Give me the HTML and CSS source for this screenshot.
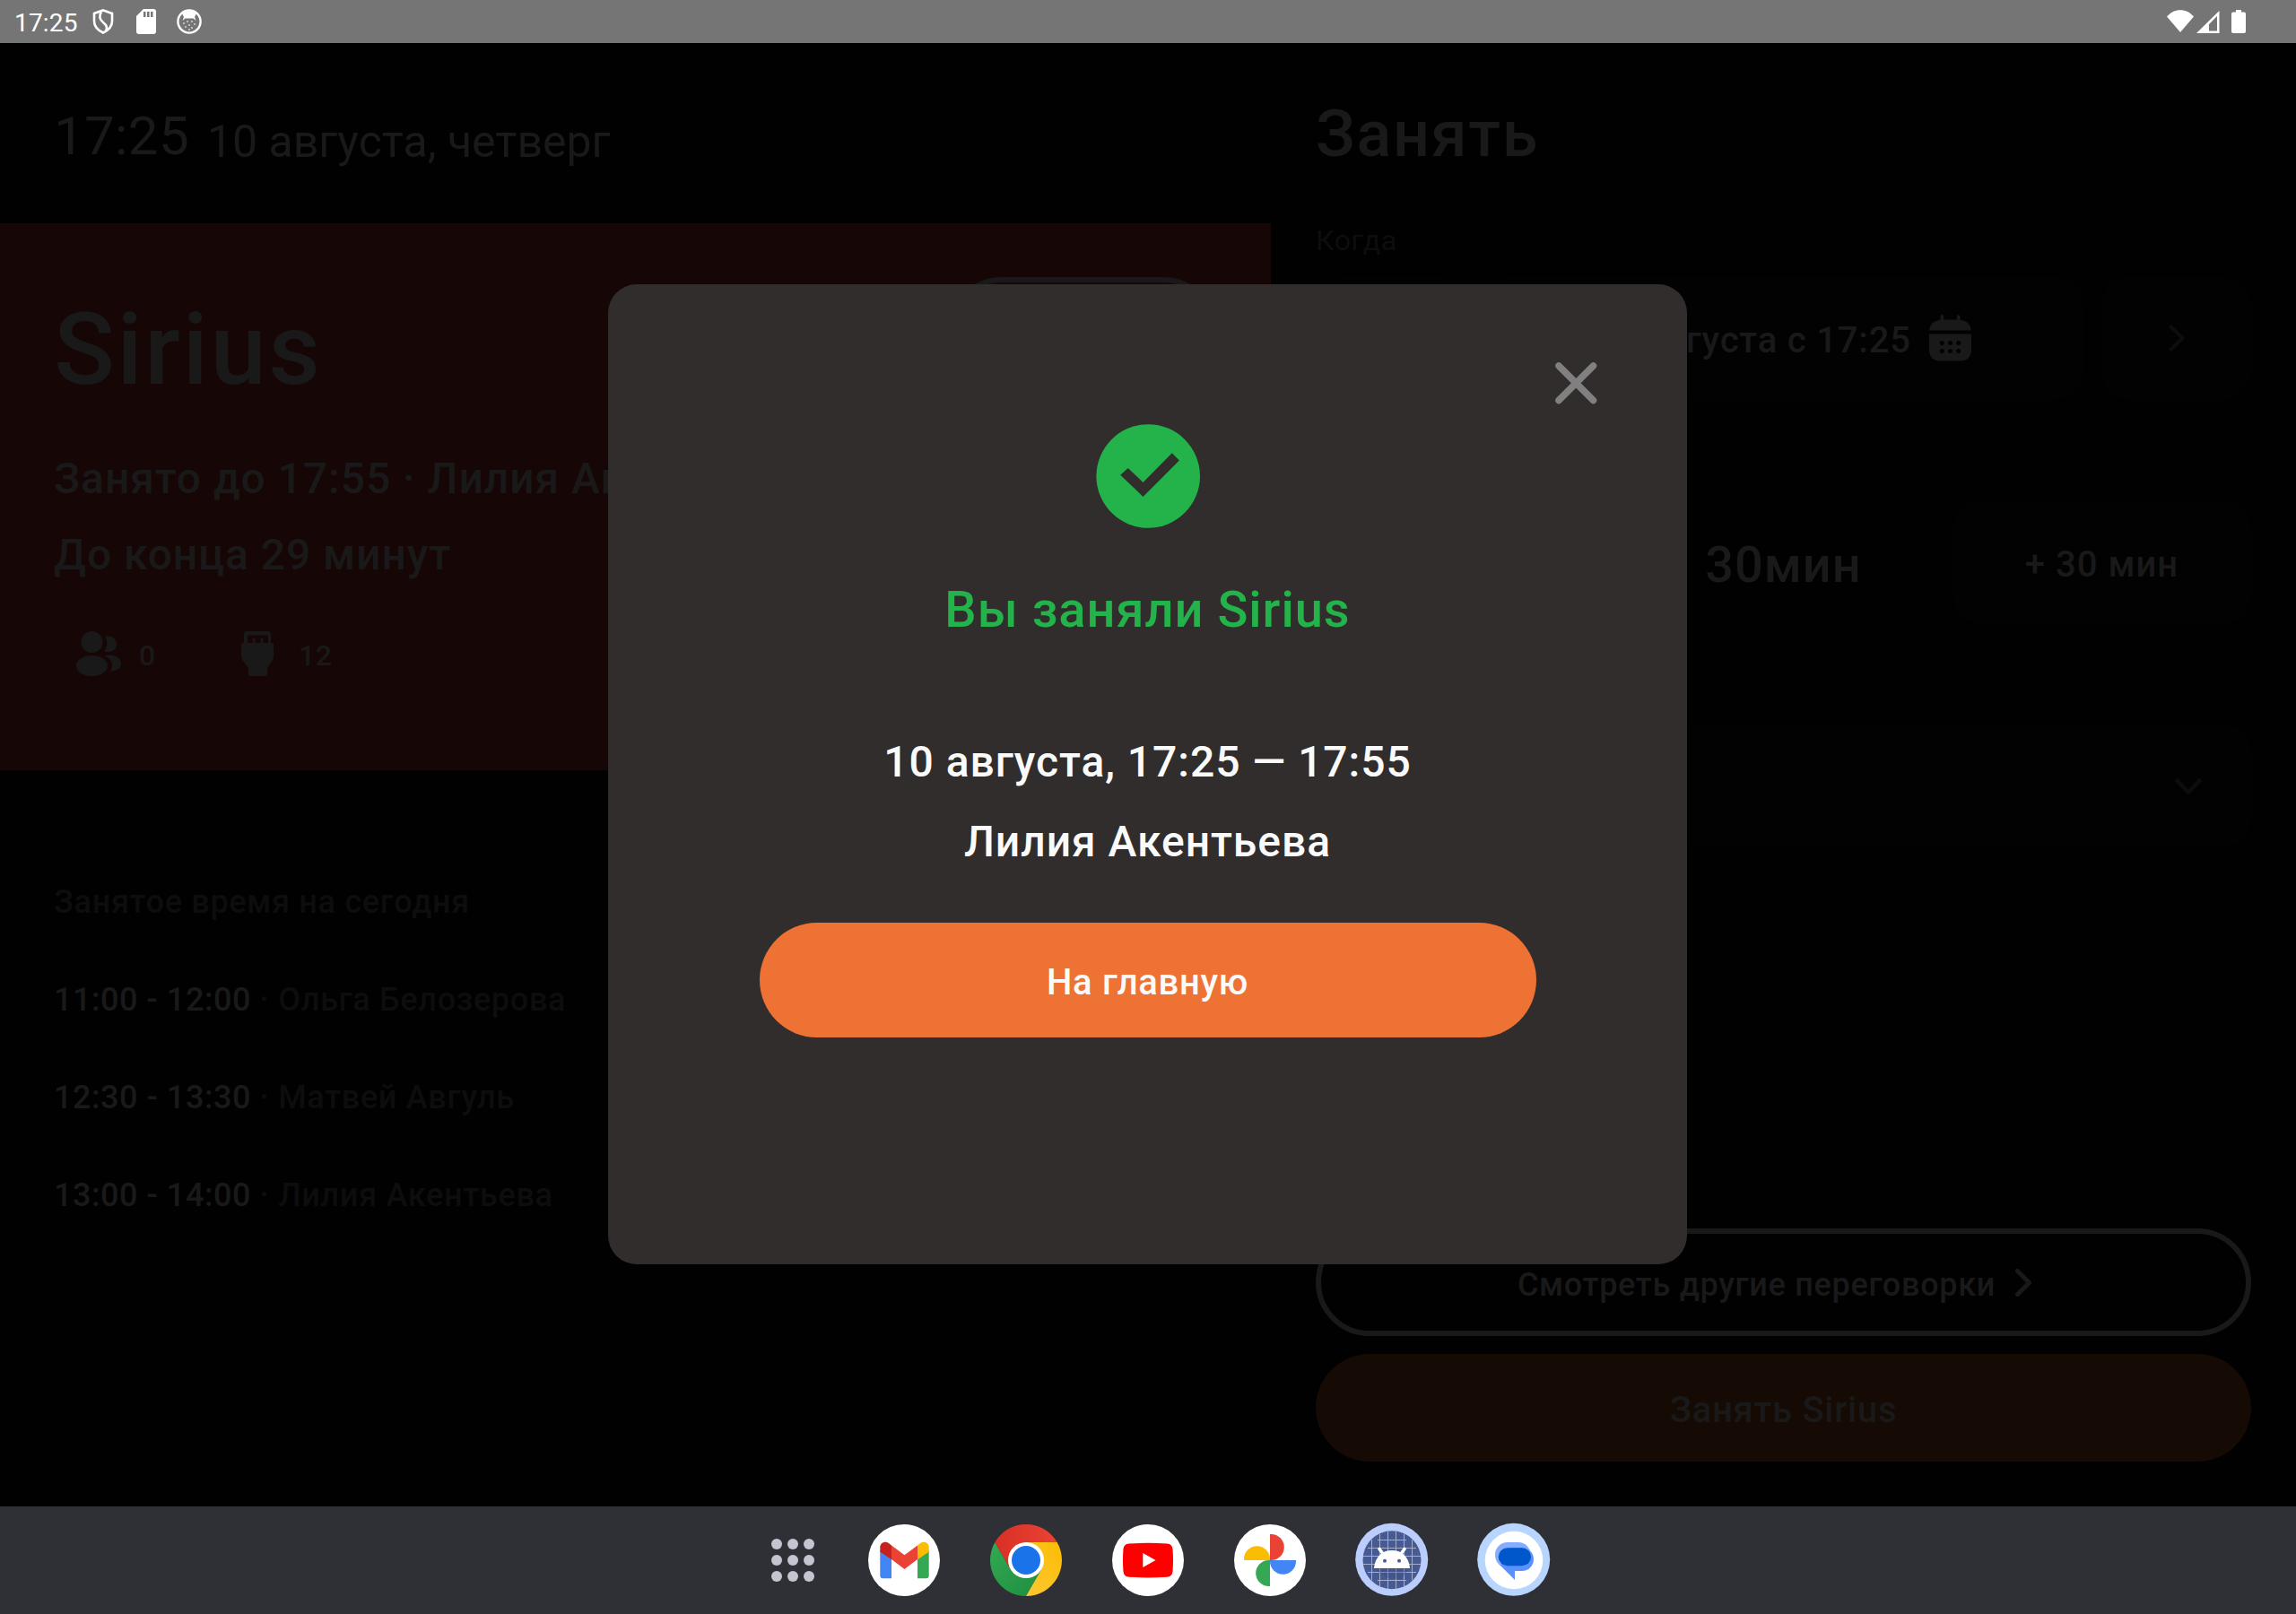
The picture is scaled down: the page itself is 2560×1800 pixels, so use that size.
FILE: index.html
```html
<!DOCTYPE html>
<html lang="ru">
<head>
<meta charset="utf-8">
<title>Sirius</title>
<link rel="stylesheet" href="styles.css">
</head>
<body>
<div class="screen">
  <header class="status">
    <div class="status-left">
      <span class="clock">17:25</span>
      <svg class="st-shield" width="24" height="28" viewBox="0 0 24 28" fill="none" stroke="#fff" stroke-width="2.6"><path d="M12 1.500 22 5v8.500c0 6-4.300 10.300-10 13-5.700-2.700-10-7-10-13V5z"/><path d="M10 3c-3 5-2 9 2.500 12.500C16 18 17 21 15 24.500"/></svg>
      <svg class="st-sd" width="22" height="28" viewBox="0 0 22 28"><path fill="#fff" fill-rule="evenodd" d="M8 0h11a3 3 0 0 1 3 3v22a3 3 0 0 1-3 3H3a3 3 0 0 1-3-3V8zM8 3v6h2.500V3zM12 3v6h2.500V3zM16 3v6h2.500V3z"/></svg>
      <svg class="st-cat" width="28" height="28" viewBox="0 0 28 28"><circle cx="14" cy="14" r="12.600" fill="none" stroke="#fff" stroke-width="2.400"/><path fill="#fff" d="M6 5C9 1 19 1 22 5l-2 4 1.500 4-3-2.500h-9L6.500 13 8 9z"/><g fill="#ddd"><circle cx="8" cy="16" r=".9"/><circle cx="12" cy="14" r=".9"/><circle cx="17" cy="14" r=".9"/><circle cx="20" cy="17" r=".9"/><circle cx="10" cy="20" r=".9"/><circle cx="14" cy="18" r=".9"/><circle cx="17" cy="21" r=".9"/><circle cx="14" cy="23" r=".9"/></g></svg>
    </div>
    <div class="status-right">
      <svg width="30" height="25" viewBox="0 0 30 25"><path fill="#fff" d="M15 25 0 7.500C8-2.300 22-2.300 30 7.500z"/></svg>
      <svg class="st-signal" width="26" height="25" viewBox="0 0 26 25"><path fill="#fff" fill-rule="evenodd" d="M25.500 0v25H0zM23 6 14 15v7.500h9z"/></svg>
      <svg class="st-battery" width="16" height="26" viewBox="0 0 16 26"><path fill="#fff" d="M5 0h6v2.500h3a2 2 0 0 1 2 2V24a2 2 0 0 1-2 2H2a2 2 0 0 1-2-2V4.500a2 2 0 0 1 2-2h3z"/></svg>
    </div>
  </header>

  <main class="app">
    <section class="room">
      <div class="now"><span class="now-time">17:25</span><span class="now-date">10 августа, четверг</span></div>
      <div class="state">
        <div class="state-info">
          <h1 class="room-name">Sirius</h1>
          <p class="state-line">Занято до 17:55 · Лилия Акентьева</p>
          <p class="state-line state-left">До конца 29 минут</p>
          <div class="features">
            <svg class="f-people" width="50" height="50" viewBox="0 0 50 50" fill="#191919"><circle cx="17.500" cy="12" r="12"/><ellipse cx="17.500" cy="38.500" rx="17.500" ry="11.500"/><path d="M32 5.500c7-1.500 13 3 13 9 0 6.500-7 10.500-14 8C35 17 35.500 11 32 5.500z"/><path d="M31 27c11-2 19 2 19 9.500 0 5-5 8-12 8.300C42 38 40 31 31 27z"/></svg>
            <span class="f-num">0</span>
            <svg class="f-hdmi" width="36" height="50" viewBox="0 0 36 50"><path fill="#191919" fill-rule="evenodd" d="M6 0h24a3 3 0 0 1 3 3v10h1.500A1.500 1.500 0 0 1 36 14.500V28c0 6-7 10-7 15v5a2 2 0 0 1-2 2H10a2 2 0 0 1-2-2v-5C8 38 0 34 0 28V14.500A1.500 1.500 0 0 1 1.500 13H3V3a3 3 0 0 1 3-3zM7 4.500V13h5.500V8h3v5h6V8h3v5H30V4.500z"/></svg>
            <span class="f-num">12</span>
          </div>
        </div>
        <div class="release"></div>
      </div>
      <div class="schedule">
        <p class="muted">Занятое время на сегодня</p>
        <p><b>11:00 - 12:00</b><span class="muted"> · Ольга Белозерова</span></p>
        <p><b>12:30 - 13:30</b><span class="muted"> · Матвей Авгуль</span></p>
        <p><b>13:00 - 14:00</b><span class="muted"> · Лилия Акентьева</span></p>
      </div>
    </section>

    <section class="booking">
      <h2 class="booking-title">Занять</h2>
      <p class="label">Когда</p>
      <div class="row-date">
        <div class="tile"></div>
        <div class="tile date">
          <span class="btn-text">10 августа с 17:25</span>
          <svg width="47" height="52" viewBox="0 0 47 52"><path fill="#191919" fill-rule="evenodd" d="M14.500 0A1.700 1.700 0 0 1 16 1.700V5.500H31V1.700a1.700 1.700 0 0 1 3.400 0V5.700C42 6.500 46.500 11 46.700 17.500H.3C.5 11 5 6.500 12.600 5.700V1.700A1.700 1.700 0 0 1 14.500 0zM0 21.500H47V39c0 8-4.500 12.500-12.500 12.500h-22C4.500 51.500 0 47 0 39zM11.800 31.500a2.500 2.500 0 1 0 5 0 2.500 2.500 0 0 0-5 0zM21 31.500a2.500 2.500 0 1 0 5 0 2.500 2.500 0 0 0-5 0zM30.200 31.500a2.500 2.500 0 1 0 5 0 2.500 2.500 0 0 0-5 0zM11.800 40.500a2.500 2.500 0 1 0 5 0 2.500 2.500 0 0 0-5 0zM21 40.500a2.500 2.500 0 1 0 5 0 2.500 2.500 0 0 0-5 0zM30.200 40.500a2.500 2.500 0 1 0 5 0 2.500 2.500 0 0 0-5 0z"/></svg>
        </div>
        <div class="tile"><svg width="18" height="30" viewBox="0 0 18 30" fill="none" stroke="#0d0d0d" stroke-width="4" stroke-linecap="round" stroke-linejoin="round"><path d="M2.500 2.500 15.500 15l-13 12.500"/></svg></div>
      </div>
      <div class="row-length">
        <div class="tile"></div>
        <span class="length">30мин</span>
        <div class="tile"><span class="btn-text plus">+ 30 мин</span></div>
      </div>
      <div class="tile select"><svg width="30" height="18" viewBox="0 0 30 18" fill="none" stroke="#0d0d0d" stroke-width="4.500" stroke-linecap="round" stroke-linejoin="round"><path d="M2.500 2.500 15 15.500l12.500-13"/></svg></div>
      <div class="actions">
        <div class="pill outline"><span>Смотреть другие переговорки</span><svg width="18" height="31" viewBox="0 0 18 31" fill="none" stroke="#191919" stroke-width="5" stroke-linecap="round" stroke-linejoin="round"><path d="M2.500 2.500 15.500 15.500l-13 13"/></svg></div>
        <div class="pill filled"><span class="btn-text">Занять Sirius</span></div>
      </div>
    </section>

    <div class="modal">
      <svg class="close" width="48" height="48" viewBox="0 0 48 48" fill="none" stroke="#808080" stroke-width="7.500" stroke-linecap="round"><path d="M5 5 43.500 43.500M43.500 5 5 43.500"/></svg>
      <svg class="done" width="116" height="116" viewBox="0 0 116 116"><circle cx="58.200" cy="58" r="57.800" fill="#24b34b"/><path fill="#302d2c" d="M27.200 56.800 35.700 49 52.500 65 84.800 32.200 92.900 40.600 52.500 81z"/></svg>
      <h3 class="modal-title">Вы заняли Sirius</h3>
      <p class="modal-line">10 августа, 17:25 — 17:55</p>
      <p class="modal-line modal-name">Лилия Акентьева</p>
      <div class="home"><span class="btn-text">На главную</span></div>
    </div>
  </main>

  <nav class="dock">
    <svg class="apps" width="48" height="48" viewBox="0 0 48 48" fill="#c5c4d0"><circle cx="6" cy="6" r="6"/><circle cx="24" cy="6" r="6"/><circle cx="42" cy="6" r="6"/><circle cx="6" cy="24" r="6"/><circle cx="24" cy="24" r="6"/><circle cx="42" cy="24" r="6"/><circle cx="6" cy="42" r="6"/><circle cx="24" cy="42" r="6"/><circle cx="42" cy="42" r="6"/></svg>
    <svg width="80" height="80" viewBox="0 0 80 80"><circle cx="40" cy="40" r="40" fill="#fff"/><path fill="#4285f4" d="M13.300 29 26 39v21.200H16.300a3 3 0 0 1-3-3z"/><path fill="#34a853" d="M67.700 29 55 39v21.200h9.700a3 3 0 0 0 3-3z"/><path fill="#ea4335" d="M26 23.500 40.500 34.300 55 23.500V39L40.500 50.100 26 39z"/><path fill="#c5221f" d="M13.300 30.700V25.500c0-5 5.300-7.500 9.500-4.500L26 23.500V39.200z"/><path fill="#fbbc04" d="M67.700 30.700V25.500c0-5-5.300-7.500-9.500-4.500L55 23.500V39.200z"/></svg>
    <svg width="80" height="80" viewBox="0 0 80 80">
      <defs><linearGradient id="cr" x1="0" x2="1"><stop offset="0" stop-color="#d93025"/><stop offset="1" stop-color="#ea4335"/></linearGradient><linearGradient id="cy" x1="0" y1="1" x2="1" y2="0"><stop offset="0" stop-color="#fcc934"/><stop offset="1" stop-color="#fbbc04"/></linearGradient><linearGradient id="cg" x1="1" y1="1" x2="0" y2="0"><stop offset="0" stop-color="#1e8e3e"/><stop offset="1" stop-color="#34a853"/></linearGradient></defs>
      <path fill="url(#cg)" d="M57.320 50 40 80A40 40 0 0 1 5.360 20L22.680 50z"/>
      <path fill="url(#cy)" d="M40 20H74.640A40 40 0 0 1 40 80L57.320 50z"/>
      <path fill="url(#cr)" d="M22.680 50 5.360 20A40 40 0 0 1 74.640 20H40z"/>
      <circle cx="40" cy="40" r="20" fill="#fff"/><circle cx="40" cy="40" r="16" fill="#1a73e8"/></svg>
    <svg width="80" height="80" viewBox="0 0 80 80"><circle cx="40" cy="40" r="40" fill="#fff"/><path fill="#f00" d="M19 21.400Q40 20.200 61 21.400C65.500 21.700 67.300 24 67.600 28.500Q68.400 40 67.600 51.500C67.300 56 65.500 58.500 61 58.800Q40 60 19 58.800C14.500 58.500 12.700 56 12.400 51.500Q11.600 40 12.400 28.500C12.700 24 14.500 21.700 19 21.400z"/><path fill="#fff" d="M34.300 32 48.500 40 34.300 48z"/></svg>
    <svg width="80" height="80" viewBox="0 0 80 80"><circle cx="40" cy="40" r="40" fill="#fff"/><path fill="#ea4335" d="M40 11h1.300a14.500 14.500 0 0 1 0 29H40z"/><path fill="#4285f4" d="M69 40v1.300a14.500 14.500 0 0 1-29 0V40z"/><path fill="#34a853" d="M40 69h-1.300a14.500 14.500 0 0 1 0-29H40z"/><path fill="#fbbc04" d="M11 40v-1.300a14.500 14.500 0 0 1 29 0V40z"/></svg>
    <svg width="80" height="80" viewBox="0 0 80 80" class="themed">
      <circle cx="39.700" cy="39.300" r="40.500" fill="#bbcdfd"/><circle cx="40" cy="39.700" r="32.500" fill="#485a92"/>
      <path stroke="#a4adc9" stroke-width="1" fill="none" d="M17.500 17v45.500M26.500 11v58M35.500 8v64M44.500 8v64M53.500 11v58M62.500 17v45.500M24 17.500h32M13 26.500h54M8 35.500h64M8 44.500h64M13 53.500h54M24 62.500h32"/>
      <path fill="#3c4b7c" d="M20 49h40L50 61 34 60z" opacity=".35"/>
      <path stroke="#fff" stroke-width="3.600" stroke-linecap="round" d="M26 27.500l6 8M54 27.500l-6 8"/>
      <path fill="#fff" d="M20 49C21 36.500 29 29 40 29s19 7.500 20 20z"/><circle cx="32" cy="40.700" r="2" fill="#485a92"/><circle cx="48" cy="40.700" r="2" fill="#485a92"/></svg>
    <svg width="80" height="80" viewBox="0 0 80 80" class="themed">
      <circle cx="39.700" cy="39.300" r="40.500" fill="#b8d5fe"/><circle cx="40" cy="40" r="32.300" fill="#fff"/>
      <path fill="#84acff" d="M33 20H45a13.500 13.500 0 0 1 0 27H26C21.500 44 19 39.500 19 34A14 14 0 0 1 33 20z"/>
      <path fill="#5a91ff" d="M36 26H49a13 13 0 0 1 0 26H41V62L25 46z"/>
      <rect x="22.700" y="26.300" width="36.300" height="20" rx="10" fill="#0057cc"/></svg>
  </nav>
</div>
</body>
</html>
```
FILE: styles.css
```css
* { box-sizing: border-box; margin: 0; padding: 0; }
body { background: #010101; font-family: Roboto, "Liberation Sans", sans-serif; font-weight: 400; letter-spacing: 1px; }
svg { display: block; flex: none; }
.screen { width: 2560px; height: 1800px; display: flex; flex-direction: column; overflow: hidden; white-space: nowrap; }

/* system bar */
.status { height: 48px; flex: none; background: #757575; display: flex; justify-content: space-between; color: #fff; }
.status-left { display: flex; align-items: flex-start; padding: 10px 0 0 16px; }
.clock { font-size: 28px; line-height: 32px; letter-spacing: .2px; width: 87px; }
.st-sd { margin-left: 25px; }
.st-cat { margin-left: 23px; }
.status-right { display: flex; align-items: flex-start; padding: 11px 56px 0 0; }
.st-signal { margin: 1px 13px 0 3px; }

.app { position: relative; flex: 1; display: flex; color: #191919; }

/* current room */
.room { width: 1417px; flex: none; }
.now { height: 201px; padding: 69px 60px 0; display: flex; align-items: flex-start; gap: 20px; }
.now-time { font-size: 60px; line-height: 70px; letter-spacing: .3px; }
.now-date { font-size: 50px; line-height: 58px; margin-top: 12px; letter-spacing: 0; }
.state { height: 610px; background: #170606; display: flex; justify-content: space-between; padding: 60px 60px 0; }
.state-info { padding-top: 15px; width: 900px; }
.room-name { font-size: 112px; line-height: 132px; font-weight: 500; letter-spacing: 2.5px; margin-bottom: 50px; }
.state-line { font-size: 48px; line-height: 56px; font-weight: 500; letter-spacing: .96px; }
.state-left { margin-top: 29px; }
.features { display: flex; align-items: flex-start; margin-top: 57px; padding-left: 25px; }
.f-num { font-size: 32px; line-height: 38px; font-weight: 500; letter-spacing: .7px; margin: 8px 0 0 20px; }
.f-hdmi { margin-left: 95px; }
.f-hdmi + .f-num { margin-left: 28px; }
.release { width: 300px; height: 120px; border: 6px solid #191919; border-radius: 60px; }
.schedule { padding: 126px 60px 0; display: flex; flex-direction: column; gap: 67px; font-size: 36px; line-height: 42px; letter-spacing: .7px; font-weight: 500; }
.schedule b { font-weight: 500; letter-spacing: .55px; }
.muted, .label { color: #0d0d0d; }

/* booking form */
.booking { flex: 1; display: flex; flex-direction: column; padding: 60px 50px 50px; }
.booking-title { font-size: 72px; line-height: 84px; font-weight: 500; letter-spacing: 1.700px; }
.label { font-size: 32px; line-height: 38px; margin: 57px 0 21px; letter-spacing: .6px; }
.tile { height: 138px; border-radius: 32px; background: #020202; display: flex; align-items: center; justify-content: center; }
.btn-text { font-size: 40px; line-height: 48px; font-weight: 500; letter-spacing: .7px; padding-top: 5px; }
.plus { letter-spacing: 1px; }
.row-date { display: grid; grid-template-columns: 167px 1fr 167px; gap: 20px; }
.date { gap: 20px; padding-right: 1px; }
.date .btn-text { letter-spacing: .8px; margin-left: -2px; }
.row-length { display: grid; grid-template-columns: 333px 1fr 333px; align-items: center; margin-top: 112px; }
.length { font-size: 56px; line-height: 66px; font-weight: 500; text-align: center; padding-top: 5px; }
.select { margin-top: 111px; padding: 2px 55px 0 0; justify-content: flex-end; }
.actions { margin-top: auto; display: flex; flex-direction: column; gap: 20px; }
.pill { height: 120px; border-radius: 60px; display: flex; align-items: center; justify-content: center; }
.outline { border: 6px solid #191919; font-size: 36px; line-height: 42px; font-weight: 500; letter-spacing: .7px; gap: 22px; padding-right: 20px; }
.outline span { padding-top: 5px; }
.filled { background: #150a04; }

/* booking confirmation */
.modal { position: absolute; left: 678px; top: 269px; width: 1203px; height: 1093px; border-radius: 32px; background: #302d2c; display: flex; flex-direction: column; align-items: center; color: #fafafa; font-weight: 500; }
.close { align-self: flex-end; margin: 86px 100px 0 0; }
.done { margin-top: 22px; }
.modal-title { font-size: 56px; line-height: 66px; font-weight: 500; color: #24b34b; margin-top: 58px; }
.modal-line { font-size: 48px; line-height: 56px; letter-spacing: .96px; margin-top: 109px; }
.modal-name { margin-top: 33px; }
.home { width: 866px; height: 128px; border-radius: 64px; background: #ee7234; margin-top: 62px; display: flex; align-items: center; justify-content: center; }

/* taskbar */
.dock { height: 120px; flex: none; background: #2f3035; display: flex; align-items: center; gap: 56px; padding-left: 860px; }
.apps { margin-right: 4px; }
.themed { overflow: visible; }
```
